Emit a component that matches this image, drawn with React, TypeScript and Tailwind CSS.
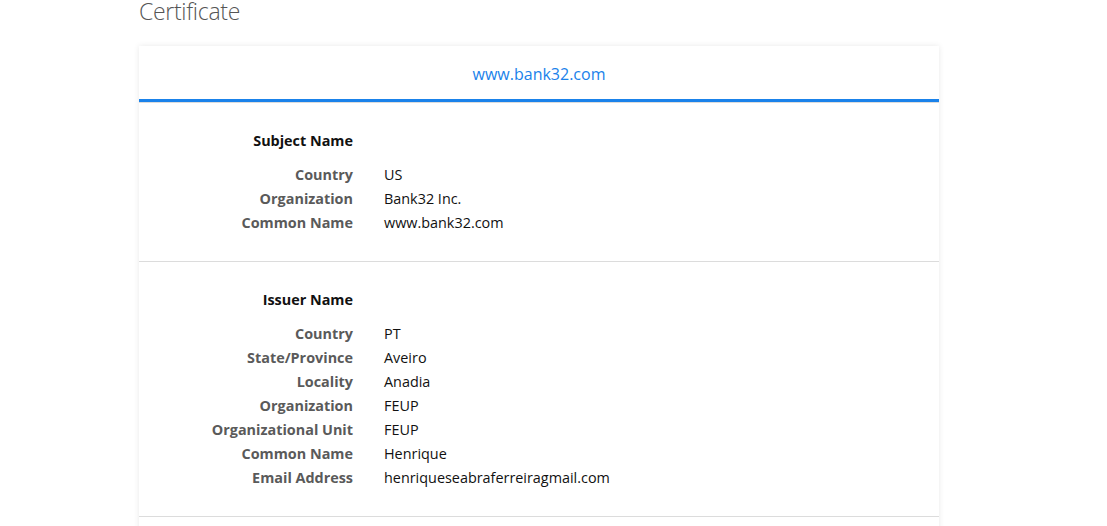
import React from "react";

const SECTIONS = [
  {
    title: "Subject Name",
    rows: [
      ["Country", "US"],
      ["Organization", "Bank32 Inc."],
      ["Common Name", "www.bank32.com"],
    ],
  },
  {
    title: "Issuer Name",
    rows: [
      ["Country", "PT"],
      ["State/Province", "Aveiro"],
      ["Locality", "Anadia"],
      ["Organization", "FEUP"],
      ["Organizational Unit", "FEUP"],
      ["Common Name", "Henrique"],
      ["Email Address", "henriqueseabraferreiragmail.com"],
    ],
  },
];

function Section({ section }: { section: (typeof SECTIONS)[number] }) {
  return (
    <div className="pt-[26px] pb-[26px] border-b border-[#dcdcdc]">
      <div className="flex leading-6 mb-[10px]">
        <div className="w-[214px] shrink-0 text-right font-bold text-[#111]">{section.title}</div>
      </div>
      {section.rows.map(([label, value]) => (
        <div key={label} className="flex leading-6">
          <div className="w-[214px] shrink-0 text-right font-bold text-[#5a5a5a]">{label}</div>
          <div className="pl-[31px] text-[#111]">{value}</div>
        </div>
      ))}
    </div>
  );
}

export default function App() {
  return (
    <div className="min-h-screen bg-white text-[14.4px]" style={{ fontFamily: "'Open Sans', 'Noto Sans', sans-serif" }}>
      <div className="ml-[139px] w-[800px]">
        <h1 className="mb-[23px] text-[23px] leading-none font-light tracking-[-0.3px] text-[#555]">Certificate</h1>

        <div className="bg-white shadow-[0_0_6px_rgba(0,0,0,0.09)]">
          {/* Tab header */}
          <div className="h-[56px] flex items-center justify-center border-b-[3px] border-[#1a82ea]">
            <span className="text-[16px] text-[#1a82ea] pt-[3px]">www.bank32.com</span>
          </div>
          <div className="border-t border-[#dcdcdc]">
            {SECTIONS.map((s) => (
              <Section key={s.title} section={s} />
            ))}
            <div className="h-[120px]" />
          </div>
        </div>
      </div>
    </div>
  );
}
